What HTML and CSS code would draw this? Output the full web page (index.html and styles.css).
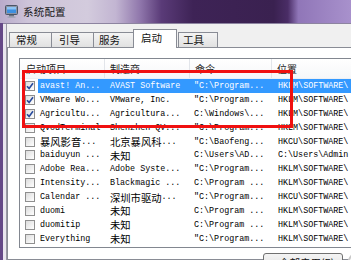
FILE: index.html
```html
<!DOCTYPE html>
<html lang="zh-CN">
<head>
    <meta charset="UTF-8">
    <meta name="viewport" content="width=device-width, initial-scale=1.0">
    <title>系统配置</title>
    <link rel="stylesheet" href="styles.css">
</head>
<body>
    <div class="window">
        <div class="titlebar">
            <svg class="app-icon" width="13" height="13" viewBox="0 0 13 13">
                <rect x="0.5" y="0.5" width="12" height="9" rx="1" fill="#8a94a6" stroke="#4b5566"/>
                <rect x="2" y="2" width="9" height="6" fill="#3d8fe0"/>
                <rect x="2" y="2" width="9" height="2.5" fill="#8cc4f5"/>
                <rect x="4" y="10" width="5" height="1.5" fill="#6b7382"/>
                <rect x="2.5" y="11.5" width="8" height="1.2" fill="#9aa2b0"/>
            </svg>
            <span class="title">系统配置</span>
        </div>

        <div class="frame">
            <div class="client">
                <div class="tabs">
                    <div class="tab t1">常规</div>
                    <div class="tab t2">引导</div>
                    <div class="tab t3">服务</div>
                    <div class="tab active">启动</div>
                    <div class="tab t5">工具</div>
                </div>

                <div class="pane">
                    <div class="list">
                        <div class="list-head">
                            <div class="col">启动项目</div>
                            <div class="col">制造商</div>
                            <div class="col">命令</div>
                            <div class="col">位置</div>
                        </div>
                        <div class="list-body" id="listBody"></div>
                    </div>
                    <div class="footer">
                        <div class="btn">全部启用(E)</div>
                        <div class="btn-ring"></div>
                    </div>
                </div>
            </div>
        </div>

        <div class="mark-box"></div>
    </div>

    <script>
        // startup items shown in the list (last one only peeks out)
        const items = [
            [true,  'avast! An...', 'AVAST Software', '"C:\\Program...', 'HKLM\\SOFTWARE\\'],
            [true,  'VMware Wo...', 'VMware, Inc.', '"C:\\Program...', 'HKLM\\SOFTWARE\\'],
            [true,  'Agricultu...', 'Agricultura...', 'C:\\Windows\\...', 'HKLM\\SOFTWARE\\'],
            [false, 'QvodTerminal', 'Shenzhen QV...', '"C:\\Program...', 'HKLM\\SOFTWARE\\'],
            [false, '<span class="cn">暴风影音</span>...', '<span class="cn">北京暴风科</span>...', '"C:\\Baofeng...', 'HKCU\\SOFTWARE\\'],
            [false, 'baiduyun ...', '<span class="cn">未知</span>', 'C:\\Users\\AD...', 'C:\\Users\\Admin'],
            [false, 'Adobe Rea...', 'Adobe Syste...', '"C:\\Program...', 'HKLM\\SOFTWARE\\'],
            [false, 'Intensity...', 'Blackmagic ...', 'C:\\Program ...', 'HKLM\\SOFTWARE\\'],
            [false, 'Calendar ...', '<span class="cn">深圳市驱动</span>...', '"C:\\Program...', 'HKCU\\SOFTWARE\\'],
            [false, 'duomi', '<span class="cn">未知</span>', 'C:\\Program ...', 'HKLM\\SOFTWARE\\'],
            [false, 'duomitip', '<span class="cn">未知</span>', 'C:\\Program ...', 'HKLM\\SOFTWARE\\'],
            [false, 'Everything', '<span class="cn">未知</span>', '"C:\\Program...', 'HKLM\\SOFTWARE\\'],
            [false, '', '', '', '']
        ];

        const check = '<svg width="8" height="8" viewBox="0 0 8 8"><path d="M1 4.2 L3.1 6.4 L7 1.3" fill="none" stroke="#274a9c" stroke-width="1.6"/></svg>';

        function renderRows() {
            const body = document.getElementById('listBody');
            items.forEach((item, i) => {
                const row = document.createElement('div');
                row.className = i === 0 ? 'row selected' : 'row';
                row.innerHTML =
                    `<div class="cell first"><span class="box">${item[0] ? check : ''}</span><span class="name">${item[1]}</span></div>` +
                    `<div class="cell">${item[2]}</div>` +
                    `<div class="cell">${item[3]}</div>` +
                    `<div class="cell">${item[4]}</div>`;
                body.appendChild(row);
            });
        }

        renderRows();
    </script>
</body>
</html>
```

FILE: styles.css
```css
* {
    box-sizing: border-box;
}

body {
    margin: 0;
    padding: 0;
    overflow: hidden;
    font-family: "Noto Sans CJK SC", sans-serif;
}

.window {
    position: relative;
    width: 351px;
    height: 260px;
    overflow: hidden;
    background: #654887;
}

.titlebar {
    height: 23px;
    display: flex;
    align-items: center;
    gap: 5px;
    padding-left: 5px;
    background: linear-gradient(90deg, #b9abcb 0%, #cdc4d9 8%, #d3cbdd 25%, #c2b5d2 33%, #8f76ab 40%, #5a3b78 46%, #3e2356 55%, #3a2150 78%, #4a2d66 82%, #9076b8 85%, #a891cc 100%);
}

.app-icon {
    flex: none;
}

.title {
    font-size: 10.5px;
    color: #161616;
    letter-spacing: 0.2px;
}

.frame {
    height: 237px;
    margin-left: 3px;
    border-top: 1px solid #8d84a0;
    background: #e9e6ee;
    padding-left: 3px;
}

.client {
    width: 420px;
    height: 100%;
    border-left: 1px solid #9a98a4;
    background: #f0f0f0;
    padding-top: 5px;
}

.tabs {
    display: flex;
    align-items: flex-end;
    height: 18px;
    padding-left: 2px;
    position: relative;
    z-index: 1;
}

.tab {
    height: 15px;
    padding-left: 6px;
    border: 1px solid #898c95;
    border-bottom: none;
    background: linear-gradient(#f4f4f4, #e1e1e1);
    font-size: 10.5px;
    line-height: 13px;
    color: #111;
}

.t1 {
    width: 43px;
}

.t2 {
    width: 43px;
    margin-left: -1px;
    padding-left: 7px;
}

.t3 {
    width: 43px;
    margin-left: -1px;
    padding-left: 5px;
}

.tab.active {
    position: relative;
    width: 44px;
    height: 19px;
    margin-left: -3px;
    margin-bottom: -1px;
    padding-left: 7px;
    background: #fff;
    line-height: 16px;
}

.t5 {
    width: 40px;
    margin-left: 1px;
    padding-left: 4px;
}

.pane {
    height: 213px;
    border: 1px solid #898c95;
    background: #fff;
    padding: 10px 0 0 11px;
}

.list {
    width: 390px;
    height: 190px;
    border: 1px solid #828790;
    display: flex;
    flex-direction: column;
    overflow: hidden;
}

.list-head {
    height: 20px;
    flex: none;
    display: grid;
    grid-template-columns: 85px 85px 82px 1fr;
    background: linear-gradient(#ffffff, #f6f7f9);
    border-bottom: 1px solid #eef0f3;
}

.list-head .col {
    font-size: 10px;
    line-height: 19px;
    color: #1d1d1d;
    padding-left: 5px;
    border-right: 1px solid #e2e5ea;
}

.list-head .col:first-child {
    padding-left: 6px;
}

.list-body {
    flex: 1;
    overflow: hidden;
}

.row {
    display: grid;
    grid-template-columns: 85px 85px 82px 1fr;
    height: 13.9px;
    font-family: "Liberation Mono", "Noto Sans CJK SC", monospace;
    font-size: 8.4px;
    color: #000;
    white-space: nowrap;
}

.cell {
    display: flex;
    align-items: center;
    padding-left: 5px;
    overflow: hidden;
}

.cell:nth-child(3) {
    padding-left: 4px;
}

.cell:nth-child(4) {
    padding-left: 6px;
}

.cell.first {
    padding-left: 5px;
}

.box {
    flex: none;
    width: 10px;
    height: 10px;
    border: 1px solid #8f8f8f;
    background: linear-gradient(135deg, #dcdcdc, #ffffff);
    display: flex;
    align-items: center;
    justify-content: center;
}

.name {
    flex: 1;
    height: 100%;
    display: flex;
    align-items: center;
    margin-left: 3px;
    padding-left: 2px;
}

.cn {
    font-family: "Noto Sans CJK SC", sans-serif;
    font-size: 10.3px;
}

.row.selected .name,
.row.selected .cell:not(.first) {
    background: #3399ff;
    color: #fff;
}

.footer {
    display: flex;
    align-items: flex-start;
    gap: 4px;
    padding: 5px 0 0 244px;
}

.btn {
    flex: none;
    width: 80px;
    height: 22px;
    border: 1px solid #707070;
    border-radius: 3px;
    background: linear-gradient(#f4f4f4, #dcdcdc);
    font-size: 10.5px;
    line-height: 18px;
    padding-left: 15px;
    color: #111;
    white-space: nowrap;
}

.btn-ring {
    flex: none;
    width: 30px;
    height: 30px;
    margin-top: -3px;
    border: 2px solid #c9c9c9;
    border-radius: 50%;
    background: #f7f7f7;
}

.mark-box {
    position: absolute;
    left: 22px;
    top: 70px;
    width: 271px;
    height: 58px;
    border: 3px solid #f01010;
}
```
